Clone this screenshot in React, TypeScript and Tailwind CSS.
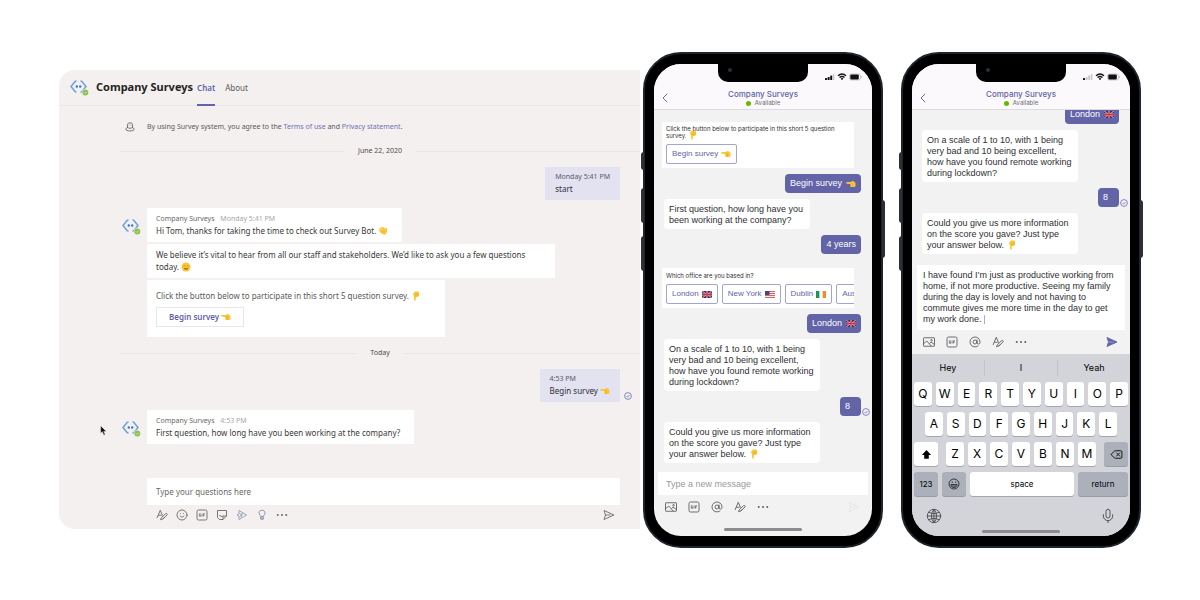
import type { ReactNode } from "react";
import { AtSign, ChevronLeft, Delete, Globe, Mic, Smile } from "lucide-react";

/* ---------- emoji ---------- */

function Hand({ dir = "left" }: { dir?: "left" | "down" }) {
  return (
    <svg
      viewBox="0 0 20 20"
      className={`-my-1 inline-block size-[10px] shrink-0 align-[2px] ${dir === "down" ? "-rotate-90" : ""}`}
      aria-hidden="true"
    >
      <path
        d="M2 6.2h7.5L12 4.4c1-.6 2-.4 3 .2l3 2.2c.7.5 1 1.200 1 2v4.400c0 1.800-1.300 3-3 3h-5c-1.500 0-2.300-.8-2.300-2 0-.6.200-1 .5-1.300-.7-.4-1-1-1-1.700 0-.6.200-1 .5-1.400L2 9.400C.9 9.300.4 8.600.4 7.800S1 6.200 2 6.200z"
        fill="#fcc633"
      />
      <path d="M9 9.600h4M9.200 12.900h3.600M13.200 8.200c.8 2.400.6 5 0 7.600" stroke="#e5a32c" strokeWidth="1" fill="none" />
    </svg>
  );
}

function Wave() {
  return (
    <svg viewBox="0 0 20 20" className="-my-1 inline-block size-[10px] align-[2px]" aria-hidden="true">
      <path
        d="M3 8.500 7.500 13M4 5l5.500 5.500M7 3l5 5.500M11 3.500l3.500 4.500"
        stroke="#fcc633"
        strokeWidth="2.800"
        strokeLinecap="round"
      />
      <path d="M6 10 13.500 6l1.700 1.500.3-3c.3-1.500 2.200-1.300 2.300.1.400 3.500.7 7-1.300 10.400-2 3-6 3-8.500.700L4.500 12z" fill="#fcc633" />
      <path d="M7 11l3 2.500M9.500 8.500l3 3" stroke="#e09a20" strokeWidth="1" />
    </svg>
  );
}

function Grin() {
  return (
    <svg viewBox="0 0 20 20" className="-my-1 inline-block size-[10px] align-[2px]" aria-hidden="true">
      <circle cx="10" cy="10" r="9" fill="#fcc633" />
      <path d="M5 8.500c.8-1.500 2.200-1.500 3 0M12 8.500c.8-1.500 2.200-1.500 3 0" stroke="#9a6a22" strokeWidth="1.300" fill="none" />
      <path d="M5.500 12h9c-.5 2.300-2.200 3.300-4.500 3.300s-4-1-4.500-3.300z" fill="#b0661c" />
    </svg>
  );
}

function Flag({ country }: { country: "gb" | "us" | "ie" }) {
  return (
    <svg viewBox="0 0 20 14" className="inline-block h-[7px] w-[10px] shrink-0" aria-hidden="true">
      {country === "gb" && (
        <>
          <rect width="20" height="14" rx="1.500" fill="#27387f" />
          <path d="M0 0l20 14M20 0L0 14" stroke="#e9dfe6" strokeWidth="2" />
          <path d="M0 0l20 14M20 0L0 14" stroke="#d22f3c" strokeWidth="1.200" />
          <path d="M10 0v14M0 7h20" stroke="#e9dfe6" strokeWidth="4" />
          <path d="M10 0v14M0 7h20" stroke="#d22f3c" strokeWidth="2.800" />
        </>
      )}
      {country === "us" && (
        <>
          <rect width="20" height="14" rx="1.500" fill="#f6e9ea" />
          <path d="M0 1h20M0 5h20M0 9h20M0 13h20" stroke="#d9626c" strokeWidth="2" />
          <rect width="9" height="8" fill="#3c4a8c" />
        </>
      )}
      {country === "ie" && (
        <>
          <rect width="20" height="14" rx="1.500" fill="#fff" />
          <rect width="6.700" height="14" fill="#1f9456" />
          <rect x="13.300" width="6.700" height="14" fill="#f28a33" />
        </>
      )}
    </svg>
  );
}

/* ---------- icons ---------- */

function BotAvatar() {
  return (
    <svg viewBox="0 0 20 18" className="h-[18px] w-5 shrink-0" fill="none" aria-hidden="true">
      <path d="M5.500 2 1 7.500 5.500 13M11.500 2 16 7.500 11.500 13" stroke="#6ba0dc" strokeWidth="1.500" />
      <path d="M5 2h1.800M5 13h1.800M10.200 2h1.800M10.200 13h1.800" stroke="#6ba0dc" strokeWidth="1" />
      <circle cx="6.800" cy="7.500" r="1.200" fill="#3b78c9" />
      <circle cx="10.200" cy="7.500" r="1.200" fill="#3b78c9" />
      <circle cx="15.300" cy="13.500" r="3.500" fill="#f3f0ef" />
      <circle cx="15.300" cy="13.500" r="3" fill="#8cc152" />
      <path d="m14 13.500 1 1 1.700-1.800" stroke="#dff0c8" strokeWidth=".7" />
    </svg>
  );
}

function FormatIcon() {
  return (
    <svg viewBox="0 0 24 24" className="size-3" fill="none" stroke="currentColor" strokeWidth="1.800" aria-hidden="true">
      <path d="M2 18 8.500 2.500 13 13M4.500 12.500h7" />
      <path d="M9 21.500l2-4.500L19 9.500c2-1.500 4.500.5 3 2.500l-8 7.500zM17 16.500l-3.500 4" />
    </svg>
  );
}

function GifIcon() {
  return (
    <svg viewBox="0 0 24 24" className="size-3" fill="none" stroke="currentColor" strokeWidth="1.800" aria-hidden="true">
      <rect x="2" y="2" width="20" height="20" rx="3" />
      <path d="M9.500 9.500H6.700v5h2.800v-2.300H8.200M12.200 9v6M18 9.500h-3V15M15 12.200h2.500" strokeWidth="1.500" />
    </svg>
  );
}

function StickerIcon() {
  return (
    <svg viewBox="0 0 24 24" className="size-3" fill="none" stroke="currentColor" strokeWidth="1.800" aria-hidden="true">
      <path d="M3 3h18v11l-7 7H7l-4-4zM21 14h-7v7" />
      <path d="M7 12c1.500 3 4.500 3.500 6.500 2" />
    </svg>
  );
}

function StreamIcon() {
  return (
    <svg viewBox="0 0 24 24" className="size-3" fill="none" stroke="#8f9bb0" strokeWidth="1.800" aria-hidden="true">
      <path d="M6 3l15 9L6 21v-6.500L2 12l4-2.500z" />
      <path d="M7 9l5 3-5 3M13 8l-3 8" />
    </svg>
  );
}

function BulbIcon() {
  return (
    <svg viewBox="0 0 24 24" className="size-3" fill="none" stroke="#8390a6" strokeWidth="1.800" aria-hidden="true">
      <path d="M9.500 15c0-2-3.500-3.500-3.500-7.300C6 4.500 8.700 2.500 12 2.500s6 2 6 5.200C18 11.500 14.500 13 14.500 15zM9.500 15v5.500h5V15M9.500 18h5" />
    </svg>
  );
}

function MoreIcon() {
  return (
    <svg viewBox="0 0 24 24" className="size-3" fill="currentColor" aria-hidden="true">
      <circle cx="3.500" cy="12" r="2" />
      <circle cx="12" cy="12" r="2" />
      <circle cx="20.500" cy="12" r="2" />
    </svg>
  );
}

function ImageIcon() {
  return (
    <svg viewBox="0 0 24 24" className="size-3" fill="none" stroke="currentColor" strokeWidth="1.800" aria-hidden="true">
      <rect x="1" y="3.500" width="22" height="17" rx="1" />
      <path d="M1 15.500 7.500 10l9 10M13 15l3-3 7 5" />
      <circle cx="17" cy="8.500" r="1.500" />
    </svg>
  );
}

function SendIcon({ solid = false }: { solid?: boolean }) {
  return (
    <svg
      viewBox="0 0 24 24"
      className="size-3"
      fill={solid ? "currentColor" : "none"}
      stroke="currentColor"
      strokeWidth="1.800"
      strokeLinejoin="round"
      aria-hidden="true"
    >
      <path d="M2 3l20 9L2 21l3-9z" />
      <path d="M5 12h10" stroke={solid ? "#d5d5ea" : "currentColor"} strokeWidth={solid ? 1 : 1.8} />
    </svg>
  );
}

function SeenIcon() {
  return (
    <svg viewBox="0 0 16 16" className="size-2" fill="none" stroke="#7173b5" strokeWidth="1.700" aria-hidden="true">
      <circle cx="8" cy="8" r="6.800" />
      <path d="m5 8.200 2.200 2.200L11.200 6" />
    </svg>
  );
}

function PrivacyIcon() {
  return (
    <svg viewBox="0 0 24 24" className="size-[10px]" fill="none" stroke="#5f5d5c" strokeWidth="2" aria-hidden="true">
      <path d="M6 14V6c0-2 2-4 6-4s6 2 6 4v8M6 12.500c3 3.500 9 3.500 12 0M9 7.500h1.500M13.500 7.500H15" />
      <path d="M6 13.500c-2.500 1-4 2-4 3.500 0 2.500 4 4.500 10 4.500s10-2 10-4.500c0-1.500-1.500-2.500-4-3.500" />
    </svg>
  );
}

function StatusIcons({ bars }: { bars: number }) {
  return (
    <svg viewBox="0 0 38 8" className="h-2 w-[38px]" aria-hidden="true">
      <rect x="0" y="5" width="2" height="2" rx=".5" fill="#111" />
      <rect x="2.600" y="4" width="2" height="3" rx=".5" fill={bars > 1 ? "#111" : "#c9c7cb"} />
      <rect x="5.200" y="2.500" width="2" height="4.500" rx=".5" fill={bars > 2 ? "#111" : "#c9c7cb"} />
      <rect x="7.800" y="1" width="1.600" height="6" rx=".5" fill="#c9c7cb" />
      <path d="M13 2.800c2.400-2.200 5.600-2.200 8 0M14.500 4.500c1.600-1.300 3.400-1.300 5 0" stroke="#111" strokeWidth="1.300" fill="none" />
      <path d="M15.600 5.600c1-.7 1.800-.7 2.800 0L17 7.200z" fill="#111" />
      <rect x="24.500" y="1" width="11" height="6" rx="1.800" fill="none" stroke="#b9b7bb" strokeWidth=".7" />
      <rect x="25.300" y="1.600" width="8.500" height="4.800" rx="1" fill="#111" />
      <path d="M36.600 3v2" stroke="#b9b7bb" strokeWidth=".8" />
    </svg>
  );
}

/* ---------- desktop chat ---------- */

function DateDivider({ children }: { children: ReactNode }) {
  return (
    <div className="flex h-4 items-center gap-3.5 pl-[61px] text-[7px] text-[#4f4d4c]">
      <span className="h-px flex-1 bg-[#e8e5e4]" />
      {children}
      <span className="h-px flex-1 bg-[#e8e5e4]" />
    </div>
  );
}

function OwnMessage({ time, seen, children }: { time: string; seen?: boolean; children: ReactNode }) {
  return (
    <div className="relative mr-5 self-end bg-[#e2e2f1] px-2.5 pt-1 pb-[5px]">
      <p className="text-[7px] leading-3 text-[#5c5a66]">{time}</p>
      <p className="leading-3 text-[#2f2e38]">{children}</p>
      {seen && (
        <span className="absolute -right-3 bottom-0.5">
          <SeenIcon />
        </span>
      )}
    </div>
  );
}

function BotMessage({ time, text, children }: { time: string; text: ReactNode; children?: ReactNode }) {
  return (
    <div className="flex items-start pl-[63px]">
      <div className="pt-2.5">
        <BotAvatar />
      </div>
      <div className="ml-[5px] flex flex-1 flex-col items-start gap-0.5">
        <div className="bg-white py-[5px] pr-3.5 pl-[9px]">
          <p className="text-[7px] leading-3 text-[#6b6968]">
            Company Surveys <span className="ml-1 text-[#a9a7a6]">{time}</span>
          </p>
          <p className="leading-3">{text}</p>
        </div>
        {children}
      </div>
    </div>
  );
}

const desktopTools = [
  { label: "Format", icon: <FormatIcon /> },
  { label: "Emoji", icon: <Smile className="size-3" strokeWidth={1.8} /> },
  { label: "GIF", icon: <GifIcon /> },
  { label: "Sticker", icon: <StickerIcon /> },
  { label: "Stream", icon: <StreamIcon /> },
  { label: "Praise", icon: <BulbIcon /> },
  { label: "More options", icon: <MoreIcon /> },
];

function DesktopChat() {
  return (
    <section className="relative mb-px min-w-0 flex-1 rounded-l-2xl bg-[#f3f0ef] font-['Noto_Sans','Open_Sans',sans-serif] text-[8px] text-[#3a3938]">
      <header className="flex h-9 items-center border-b border-[#ebe8e7] pl-[11px]">
        <BotAvatar />
        <h1 className="ml-1.5 text-[11px] font-bold text-[#242322]">Company Surveys</h1>
        <nav className="ml-1 flex h-full gap-2.5">
          <a href="#chat" className="-mb-px flex items-center border-b-2 border-[#6264a7] pt-0.5 font-semibold text-[#6264a7]">
            Chat
          </a>
          <a href="#about" className="flex items-center text-[#5c5a59]">
            About
          </a>
        </nav>
      </header>

      <div className="flex flex-col gap-2 pt-[13px]">
        <div className="flex h-4 items-center pl-[66px] text-[7px] text-[#5c5a59]">
          <PrivacyIcon />
          <p className="ml-3">
            By using Survey system, you agree to the{" "}
            <a href="#terms" className="text-[#6f70b5]">Terms of use</a> and{" "}
            <a href="#privacy" className="text-[#6f70b5]">Privacy statement</a>.
          </p>
        </div>
        <DateDivider>June 22, 2020</DateDivider>
        <OwnMessage time="Monday 5:41 PM">start</OwnMessage>
        <BotMessage
          time="Monday 5:41 PM"
          text={<>Hi Tom, thanks for taking the time to check out Survey Bot. <Wave /></>}
        >
          <p className="max-w-[408px] bg-white px-[9px] py-[5px] leading-3">
            We believe it’s vital to hear from all our staff and stakeholders. We’d like to ask you a few questions today. <Grin />
          </p>
          <div className="bg-white py-2.5 pr-6 pl-[9px]">
            <p className="leading-3 text-[#5c5a59]">
              Click the button below to participate in this short 5 question survey. <Hand dir="down" />
            </p>
            <button className="mt-[5px] flex h-5 items-center gap-0.5 border border-[#e6e6f3] px-3 font-semibold text-[#6264a7]">
              Begin survey <Hand />
            </button>
          </div>
        </BotMessage>
        <DateDivider>Today</DateDivider>
        <OwnMessage time="4:53 PM" seen>
          Begin survey <Hand />
        </OwnMessage>
        <BotMessage time="4:53 PM" text="First question, how long have you been working at the company?" />
      </div>

      <form className="mt-[34px] mr-5 ml-[88px]">
        <input
          type="text"
          aria-label="Type your questions here"
          placeholder="Type your questions here"
          className="block h-[27px] w-full bg-white px-[9px] outline-none placeholder:text-[#6b6968]"
        />
        <div className="flex h-6 items-start gap-2 px-[9px] pt-1 text-[#6b6968]">
          {desktopTools.map((tool) => (
            <button key={tool.label} type="button" aria-label={tool.label}>
              {tool.icon}
            </button>
          ))}
          <button type="submit" aria-label="Send" className="ml-auto -mr-1">
            <SendIcon />
          </button>
        </div>
      </form>

      {/* mouse pointer */}
      <svg viewBox="0 0 12 18" className="absolute top-[355px] left-[41px] h-[11px] w-[7px]" aria-hidden="true">
        <path d="M1 1v13l3-3 2.500 6 2.500-1-2.500-5.500H11z" fill="#111" stroke="#fff" strokeWidth=".8" />
      </svg>
    </section>
  );
}

/* ---------- phones ---------- */

function Phone({ bars, children }: { bars: number; children: ReactNode }) {
  return (
    <section className="relative flex w-60 shrink-0 rounded-[38px] border-2 border-[#1d242c] bg-black px-[9px] py-2.5 font-['Liberation_Sans',Arial,sans-serif] text-[9px] text-[#2f2e33]">
      {/* side buttons */}
      <span className="absolute top-[98px] -left-1 h-[18px] w-[3px] rounded-l-sm bg-[#2c3036]" />
      <span className="absolute top-[134px] -left-1 h-[35px] w-[3px] rounded-l-sm bg-[#2c3036]" />
      <span className="absolute top-[182px] -left-1 h-[35px] w-[3px] rounded-l-sm bg-[#2c3036]" />
      <span className="absolute top-[146px] -right-1 h-[58px] w-[3px] rounded-r-sm bg-[#2c3036]" />

      <div className="relative flex min-w-0 flex-1 flex-col overflow-hidden rounded-[27px] bg-[#f3f2f3]">
        <header className="relative h-[46px] shrink-0 border-b border-[#dddbe0] bg-[#fbf9fb] px-2 text-center font-['Inter','Liberation_Sans',sans-serif]">
          {/* notch */}
          <div className="absolute top-0 left-1/2 h-[18px] w-[90px] -translate-x-1/2 rounded-b-[10px] bg-black">
            <span className="absolute top-1 left-2.5 size-1 rounded-full bg-[#1c3440]" />
          </div>
          <div className="absolute top-[9px] right-[9px]">
            <StatusIcons bars={bars} />
          </div>
          <a href="#back" aria-label="Back" className="absolute top-[26px] left-[3px] text-[#6264a7]">
            <ChevronLeft className="size-4" strokeWidth={1.4} />
          </a>
          <h2 className="pt-[25px] text-[8px] font-medium leading-[10px] text-[#6264a7]">Company Surveys</h2>
          <p className="flex items-center justify-center gap-1 text-[6px] leading-2 text-[#6b6a6e]">
            <span className="size-[5px] rounded-full bg-[#6bb700]" />
            Available
          </p>
        </header>
        {children}
      </div>
    </section>
  );
}

function Incoming({ children }: { children: ReactNode }) {
  return (
    <p className="ml-0.5 max-w-[156px] self-start rounded-[4px] bg-white px-[5px] pt-[5px] pb-[3px] leading-[11px]">
      {children}
    </p>
  );
}

function Outgoing({ seen, children }: { seen?: boolean; children: ReactNode }) {
  return (
    <div className="relative mr-[3px] flex h-[19px] items-center gap-1 self-end rounded-[4px] bg-[#6264a7] px-[5px] text-white">
      {children}
      {seen && (
        <span className="absolute -right-[9px] bottom-0">
          <SeenIcon />
        </span>
      )}
    </div>
  );
}

function CardButton({ children }: { children: ReactNode }) {
  return (
    <button className="flex h-5 shrink-0 items-center gap-[3px] rounded-[2px] border border-[#a3a4d0] px-[5px] text-[8px] text-[#6264a7]">
      {children}
    </button>
  );
}

function PhoneTools({ active = false }: { active?: boolean }) {
  return (
    <div className="flex h-6 shrink-0 items-center gap-[11px] pr-3 pl-[11px] text-[#5f5e63]">
      <button aria-label="Photo"><ImageIcon /></button>
      <button aria-label="GIF"><GifIcon /></button>
      <button aria-label="Mention"><AtSign className="size-3" strokeWidth={1.8} /></button>
      <button aria-label="Format"><FormatIcon /></button>
      <button aria-label="More options"><MoreIcon /></button>
      <button aria-label="Send" className={active ? "ml-auto text-[#6264a7]" : "ml-auto text-[#e6e4e7]"}>
        <SendIcon solid={active} />
      </button>
    </div>
  );
}

function ScaleQuestion() {
  return (
    <Incoming>
      On a scale of 1 to 10, with 1 being very bad and 10 being excellent, how have you found remote working during lockdown?
    </Incoming>
  );
}

function MoreInfoQuestion() {
  return (
    <Incoming>
      Could you give us more information on the score you gave? Just type your answer below. <Hand dir="down" />
    </Incoming>
  );
}

function SurveyPhone() {
  return (
    <Phone bars={3}>
      <div className="flex flex-1 flex-col gap-1.5 px-2 pt-3 pb-[9px]">
        <div className="mr-2.5 bg-white px-1 pt-[3px] pb-1">
          <p className="mb-[5px] font-['Inter','Liberation_Sans',sans-serif] text-[6px] leading-[7px]">
            Click the button below to participate in this short 5 question survey. <Hand dir="down" />
          </p>
          <div className="flex">
            <CardButton>Begin survey <Hand /></CardButton>
          </div>
        </div>
        <Outgoing>Begin survey <Hand /></Outgoing>
        <div className="flex max-w-[148px]">
          <Incoming>First question, how long have you been working at the company?</Incoming>
        </div>
        <Outgoing>4 years</Outgoing>
        <div className="mt-2 mr-2.5 overflow-hidden bg-white pt-1 pb-1 pl-1">
          <p className="mb-1 font-['Inter','Liberation_Sans',sans-serif] text-[6px] leading-[8px]">
            Which office are you based in?
          </p>
          <div className="flex gap-1">
            <CardButton>London <Flag country="gb" /></CardButton>
            <CardButton>New York <Flag country="us" /></CardButton>
            <CardButton>Dublin <Flag country="ie" /></CardButton>
            <CardButton>Austin <Flag country="us" /></CardButton>
          </div>
        </div>
        <Outgoing>London <Flag country="gb" /></Outgoing>
        <ScaleQuestion />
        <Outgoing seen><span className="pr-1.5">8</span></Outgoing>
        <MoreInfoQuestion />
      </div>
      <input
        type="text"
        aria-label="Type a new message"
        placeholder="Type a new message"
        className="mx-1 block h-[23px] shrink-0 bg-white px-2 outline-none placeholder:text-[#9a989d]"
      />
      <PhoneTools />
      <div className="flex h-[17px] items-center justify-center pt-2 pb-1">
        <span className="h-[3px] w-[78px] rounded-full bg-[#8d8b8f]" />
      </div>
    </Phone>
  );
}

const topRow = ["Q", "W", "E", "R", "T", "Y", "U", "I", "O", "P"];
const middleRow = ["A", "S", "D", "F", "G", "H", "J", "K", "L"];
const bottomRow = ["Z", "X", "C", "V", "B", "N", "M"];

function Key({ children }: { children: string }) {
  return (
    <button className="h-6 min-w-0 flex-1 rounded-[3px] bg-white text-[12px] text-black shadow-[0_1px_0_#a5a7ad]">
      {children}
    </button>
  );
}

function Keyboard() {
  return (
    <div className="bg-[#d2d4da] font-['Inter','Liberation_Sans',sans-serif] text-black">
      <div className="flex h-7 items-center divide-x divide-[#c3c5cb] text-[9px]">
        <button className="h-4 flex-1">Hey</button>
        <button className="h-4 flex-1">I</button>
        <button className="h-4 flex-1">Yeah</button>
      </div>
      <div className="flex flex-col gap-1.5 px-0.5">
        <div className="flex gap-1">
          {topRow.map((k) => <Key key={k}>{k}</Key>)}
        </div>
        <div className="flex gap-1 px-[11px]">
          {middleRow.map((k) => <Key key={k}>{k}</Key>)}
        </div>
        <div className="flex gap-2">
          <button aria-label="Shift" className="flex h-6 w-6 items-center justify-center rounded-[3px] bg-white shadow-[0_1px_0_#a5a7ad]">
            <svg viewBox="0 0 12 12" className="size-[11px]" aria-hidden="true">
              <path d="M6 1 11 6.500H8.500V10.500h-5v-4H1z" fill="#000" />
            </svg>
          </button>
          <div className="flex flex-1 gap-1">
            {bottomRow.map((k) => <Key key={k}>{k}</Key>)}
          </div>
          <button aria-label="Delete" className="flex h-6 w-6 items-center justify-center rounded-[3px] bg-[#abb0bb] shadow-[0_1px_0_#979ba3]">
            <Delete className="size-[13px]" strokeWidth={1.6} />
          </button>
        </div>
        <div className="flex gap-1 text-[8px]">
          <button className="h-6 w-6 rounded-[3px] bg-[#abb0bb] shadow-[0_1px_0_#979ba3]">123</button>
          <button aria-label="Emoji keyboard" className="flex h-6 w-6 items-center justify-center rounded-[3px] bg-[#abb0bb] shadow-[0_1px_0_#979ba3]">
            <svg viewBox="0 0 24 24" className="size-3" fill="none" stroke="#222" strokeWidth="1.700" aria-hidden="true">
              <circle cx="12" cy="12" r="10" />
              <path d="M5.500 13h13c-.5 4-3 6-6.500 6s-6-2-6.500-6zM7 16h10M8.500 7v3M15.500 7v3" />
            </svg>
          </button>
          <button className="h-6 flex-1 rounded-[3px] bg-white shadow-[0_1px_0_#a5a7ad]">space</button>
          <button className="h-6 w-[50px] rounded-[3px] bg-[#abb0bb] shadow-[0_1px_0_#979ba3]">return</button>
        </div>
      </div>
      <div className="relative flex h-10 items-center justify-between px-3.5 text-[#4c4e54]">
        <button aria-label="Switch keyboard">
          <Globe className="size-4" strokeWidth={1.4}>
            <path d="M12 2v20M4.500 6.500c4 2.500 11 2.500 15 0M4.500 17.500c4-2.500 11-2.500 15 0" />
          </Globe>
        </button>
        <button aria-label="Dictate"><Mic className="size-4" strokeWidth={1.4} /></button>
        <span className="absolute bottom-[3px] left-1/2 h-[3px] w-[78px] -translate-x-1/2 rounded-full bg-[#8d8b8f]" />
      </div>
    </div>
  );
}

function TypingPhone() {
  return (
    <Phone bars={1}>
      <div className="flex flex-1 flex-col gap-1.5 overflow-hidden px-2 pb-[9px]">
        <div className="-mt-[5px] flex flex-col">
          <Outgoing>London <Flag country="gb" /></Outgoing>
        </div>
        <ScaleQuestion />
        <Outgoing seen><span className="pr-1.5">8</span></Outgoing>
        <MoreInfoQuestion />
      </div>
      <div className="relative mx-[5px]">
        <textarea
          aria-label="Message"
          rows={5}
          defaultValue="I have found I’m just as productive working from home, if not more productive. Seeing my family during the day is lovely and not having to commute gives me more time in the day to get my work done."
          className="block w-full resize-none overflow-hidden bg-white px-1.5 py-[5px] leading-[11px] outline-none"
        />
        <span className="absolute bottom-1.5 left-[67px] h-[9px] w-px bg-[#a9aad6]" />
      </div>
      <PhoneTools active />
      <Keyboard />
    </Phone>
  );
}

export default function App() {
  return (
    <main className="flex min-h-screen items-center bg-white px-[59px]">
      <DesktopChat />
      <div className="ml-[3px] flex gap-[18px]">
        <SurveyPhone />
        <TypingPhone />
      </div>
    </main>
  );
}
